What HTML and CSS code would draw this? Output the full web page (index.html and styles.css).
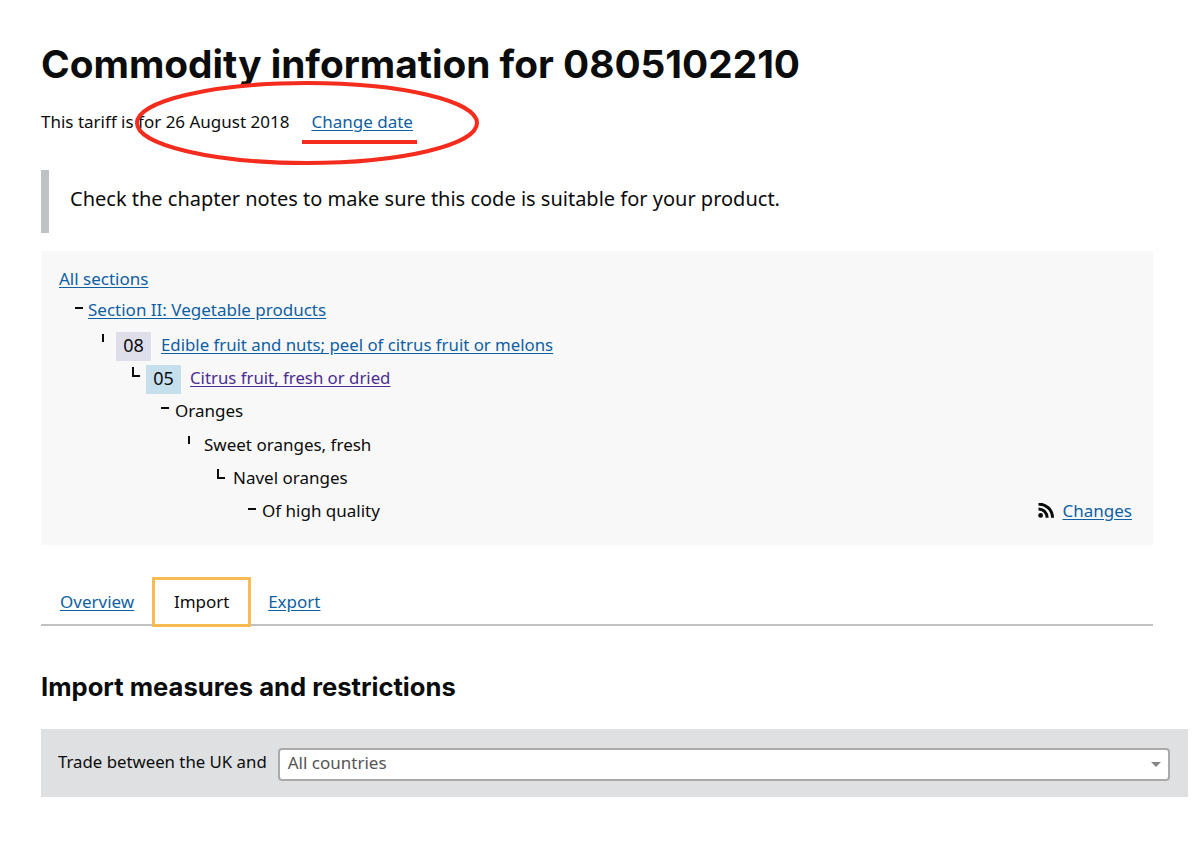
FILE: index.html
```html
<!DOCTYPE html>
<html lang="en">

<head>
    <meta charset="UTF-8">
    <meta name="viewport" content="width=device-width, initial-scale=1.0">
    <title>Commodity information for 0805102210</title>
    <link rel="stylesheet" href="styles.css">
</head>

<body>
    <main class="page">
        <h1>Commodity information for 0805102210</h1>

        <p class="tariff-date">
            <span>This tariff is for 26 August 2018</span>
            <a href="#">Change date</a>
        </p>

        <div class="inset">Check the chapter notes to make sure this code is suitable for your product.</div>

        <div class="tree-box">
            <ul class="tree">
                <li class="row-all"><a href="#">All sections</a></li>
                <li class="row-section lvl-1"><i class="mark dash"></i><a href="#">Section II: Vegetable products</a></li>
                <li class="row-chapter lvl-2"><i class="mark tick"></i><span class="code code-chapter">08</span><a href="#">Edible fruit and nuts; peel of citrus fruit or melons</a></li>
                <li class="row-heading lvl-3"><i class="mark corner"></i><span class="code code-heading">05</span><a class="visited" href="#">Citrus fruit, fresh or dried</a></li>
                <li class="row-plain lvl-4"><i class="mark dash"></i>Oranges</li>
                <li class="row-plain lvl-5"><i class="mark tick"></i>Sweet oranges, fresh</li>
                <li class="row-plain lvl-6"><i class="mark corner"></i>Navel oranges</li>
                <li class="row-plain lvl-7">
                    <i class="mark dash"></i>Of high quality
                    <a class="changes" href="#">
                        <svg class="rss" width="17" height="15" viewBox="0 0 17 15" aria-hidden="true">
                            <circle cx="2.6" cy="12.4" r="2.4" fill="#0b0c0c" />
                            <path d="M0.5 5.9a8.6 8.6 0 0 1 8.6 8.8" fill="none" stroke="#0b0c0c" stroke-width="3" />
                            <path d="M0.5 1.2a13.4 13.4 0 0 1 14 13.5" fill="none" stroke="#0b0c0c" stroke-width="3" />
                        </svg>
                        <span>Changes</span>
                    </a>
                </li>
            </ul>
        </div>

        <nav class="tabs">
            <a class="tab" href="#">Overview</a>
            <span class="tab tab-active">Import</span>
            <a class="tab" href="#">Export</a>
        </nav>

        <h2>Import measures and restrictions</h2>

        <div class="filter">
            <label for="country">Trade between the UK and</label>
            <div class="select" id="country">
                <span>All countries</span>
                <i class="arrow"></i>
            </div>
        </div>
    </main>

    <!-- red pen marks drawn on top of the screenshot -->
    <svg class="pen" width="500" height="90" viewBox="0 0 500 90" aria-hidden="true">
        <path d="M137 43C137 21 213 3 307 3C401 3 477 21 477 43C477 65 401 83 307 83C213 83 137 65 137 43" fill="none" stroke="#f32c1e" stroke-width="4" />
        <path d="M302 62H417" fill="none" stroke="#f32c1e" stroke-width="4" />
    </svg>
</body>

</html>
```

FILE: styles.css
```css
body {
    margin: 0;
    background-color: #fff;
    color: #0b0c0c;
    font-family: "Noto Sans", Arial, sans-serif;
    position: relative;
}

a {
    color: #0f5fa3;
    text-decoration: underline;
    text-underline-offset: 2px;
}

a.visited {
    color: #4c2c92;
}

.page {
    padding: 0 47px 0 41px;
}

h1 {
    margin: 0;
    padding-top: 37px;
    font-family: Inter, Arial, sans-serif;
    font-size: 38.8px;
    line-height: 54px;
    font-weight: 700;
}

.tariff-date {
    margin: 19px 0 0;
    font-size: 17px;
    line-height: 24px;
    display: flex;
    gap: 22px;
}

.inset {
    margin-top: 36px;
    height: 63px;
    padding-left: 21px;
    border-left: 8px solid #bfc1c3;
    font-size: 20px;
    line-height: 58px;
}

.tree-box {
    margin-top: 18px;
    height: 294px;
    background-color: #f8f8f8;
    padding: 12px 21px 0 18px;
    box-sizing: border-box;
}

.tree {
    list-style: none;
    margin: 0;
    padding: 0;
    font-size: 17px;
}

.tree li {
    display: flex;
    align-items: center;
}

.row-all,
.row-section {
    height: 31px;
}

.row-chapter {
    height: 33px;
    margin-top: 4px;
    font-size: 16.8px;
}

.row-heading {
    height: 33px;
    font-size: 16.8px;
}

.row-chapter a,
.row-heading a {
    margin-top: -2px;
}

.row-plain {
    height: 33px;
}

.lvl-1 { padding-left: 16px; }
.lvl-2 { padding-left: 43px; }
.lvl-3 { padding-left: 73px; }
.tree .lvl-4 { height: 30px; padding-left: 102px; }
.tree .lvl-5 { margin-top: 3px; padding-left: 129px; }
.lvl-6 { padding-left: 158px; }
.lvl-7 { padding-left: 189px; }

.mark {
    display: block;
    flex: none;
    width: 14px;
    height: 12px;
    margin-top: -6px;
    position: relative;
}

.lvl-1 .mark {
    width: 13px;
}

.dash::before {
    content: "";
    position: absolute;
    left: 0;
    top: 6px;
    width: 8px;
    height: 2px;
    background-color: #0b0c0c;
}

.tick::before {
    content: "";
    position: absolute;
    left: 0;
    top: 0;
    width: 2px;
    height: 8px;
    background-color: #0b0c0c;
}

.corner::before {
    content: "";
    position: absolute;
    left: 0;
    top: 0;
    width: 8px;
    height: 10px;
    border-left: 2px solid #0b0c0c;
    border-bottom: 2px solid #0b0c0c;
    box-sizing: border-box;
}

.row-chapter .mark,
.row-heading .mark {
    margin-top: -12px;
}

.row-plain.lvl-5 .mark,
.row-plain.lvl-6 .mark {
    width: 16px;
}

.code {
    width: 35px;
    height: 29px;
    margin-top: 2px;
    line-height: 27px;
    text-align: center;
    margin-right: 10px;
    font-size: 18px;
}

.code-chapter {
    background-color: #dfdfec;
}

.code-heading {
    background-color: #c5dfec;
    margin-right: 9px;
}

.changes {
    margin-left: auto;
    display: flex;
    align-items: center;
    gap: 8px;
}

.rss {
    display: block;
}

.tabs {
    margin-top: 32px;
    height: 47px;
    padding-left: 2px;
    border-bottom: 2px solid #bfc1c3;
    display: flex;
    font-size: 17px;
}

.tab {
    display: block;
    line-height: 50px;
    padding: 0 18px;
}

.tab:first-child {
    padding-left: 17px;
}

.tab:last-child {
    padding-left: 17px;
}

.tab-active {
    flex: none;
    width: 93px;
    height: 44px;
    padding: 0;
    border: 3px solid #f7bb53;
    line-height: 44px;
    text-align: center;
    background-color: #fff;
    position: relative;
}

h2 {
    margin: 41px 0 0;
    font-family: Inter, Arial, sans-serif;
    font-size: 25.6px;
    line-height: 40px;
    font-weight: 700;
}

.filter {
    margin: 22px -35px 0 0;
    height: 68px;
    background-color: #dee0e2;
    display: flex;
    align-items: center;
    padding: 0 18px 0 17px;
    gap: 11px;
    font-size: 16.8px;
}

.filter label {
    margin-top: -3px;
}

.select {
    flex: 1;
    height: 33px;
    box-sizing: border-box;
    border: 2px solid #aaa;
    border-radius: 4px;
    background-color: #fff;
    display: flex;
    align-items: center;
    justify-content: space-between;
    padding: 0 7px 0 8px;
    color: #555;
    font-size: 17px;
    line-height: 25px;
    margin-top: 2px;
}

.select span {
    margin-top: -3px;
}

.arrow {
    width: 0;
    height: 0;
    border-left: 5px solid transparent;
    border-right: 5px solid transparent;
    border-top: 5px solid #888;
}

.pen {
    position: absolute;
    left: 0;
    top: 80px;
}
```
